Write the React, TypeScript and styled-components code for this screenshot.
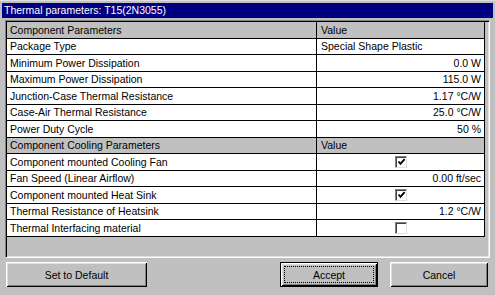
import React from 'react';
import styled, { createGlobalStyle } from 'styled-components';

type Param = {
  label: string;
  value?: string;
  align?: 'left' | 'right';
  checked?: boolean;
};

type Section = {
  title: string;
  rows: Param[];
};

const SECTIONS: Section[] = [
  {
    title: 'Component Parameters',
    rows: [
      { label: 'Package Type', value: 'Special Shape Plastic', align: 'left' },
      { label: 'Minimum Power Dissipation', value: '0.0 W' },
      { label: 'Maximum Power Dissipation', value: '115.0 W' },
      { label: 'Junction-Case Thermal Resistance', value: '1.17 °C/W' },
      { label: 'Case-Air Thermal Resistance', value: '25.0 °C/W' },
      { label: 'Power Duty Cycle', value: '50 %' },
    ],
  },
  {
    title: 'Component Cooling Parameters',
    rows: [
      { label: 'Component mounted Cooling Fan', checked: true },
      { label: 'Fan Speed (Linear Airflow)', value: '0.00 ft/sec' },
      { label: 'Component mounted Heat Sink', checked: true },
      { label: 'Thermal Resistance of Heatsink', value: '1.2 °C/W' },
      { label: 'Thermal Interfacing material', checked: false },
    ],
  },
];

const GlobalStyle = createGlobalStyle`
  html, body {
    margin: 0;
    padding: 0;
    background: #c0c0c0;
  }
  body {
    font-family: "Liberation Sans", Arial, sans-serif;
    font-size: 10.5px;
    color: #000;
  }
`;

const Checkbox = ({ checked }: { checked: boolean }) => (
  <SCheckBox>
    {checked && (
      <svg width="9" height="9" viewBox="0 0 9 9">
        <path d="M1.5 3.5 L3.5 5.8 L7.6 1.2" fill="none" stroke="#000" strokeWidth="1.9" />
      </svg>
    )}
  </SCheckBox>
);

const App = () => {
  return (
    <SWindow>
      <GlobalStyle />
      <STitleBar>Thermal parameters: T15(2N3055)</STitleBar>
      <SFrame>
        <SGrid>
          {SECTIONS.map((section) => (
            <React.Fragment key={section.title}>
              <SRow>
                <SCell $header>{section.title}</SCell>
                <SCell $header $value>
                  Value
                </SCell>
              </SRow>
              {section.rows.map((row) => (
                <SRow key={row.label}>
                  <SCell>{row.label}</SCell>
                  <SCell $value $align={row.checked === undefined ? row.align || 'right' : 'center'}>
                    {row.checked === undefined ? row.value : <Checkbox checked={row.checked} />}
                  </SCell>
                </SRow>
              ))}
            </React.Fragment>
          ))}
        </SGrid>
      </SFrame>
      <SButtonBar>
        <SButton $width={141}>Set to Default</SButton>
        <SSpacer />
        <SButton $width={98} $default>
          <SFocus>Accept</SFocus>
        </SButton>
        <SButton $width={98}>Cancel</SButton>
      </SButtonBar>
    </SWindow>
  );
};

export default App;

const SWindow = styled.div`
  width: 495px;
  height: 295px;
  box-sizing: border-box;
  padding: 2px;
  background: #c0c0c0;
  border-top: 1px solid #dfdfdf;
  display: flex;
  flex-direction: column;
  overflow: hidden;
`;

const STitleBar = styled.div`
  height: 15px;
  background: #000080;
  color: #fff;
  font-size: 10.5px;
  line-height: 15px;
  padding-left: 2px;
  white-space: nowrap;
`;

const SFrame = styled.div`
  margin: 2px 3px 0 3px;
  height: 238px;
  box-sizing: border-box;
  background: #c0c0c0;
  border-top: 1px solid #808080;
  border-left: 1px solid #808080;
  border-right: 1px solid #fff;
  border-bottom: 1px solid #fff;
  box-shadow: inset 1px 1px 0 #000, inset -1px -1px 0 #dfdfdf;
  padding: 1px;
`;

const SGrid = styled.div`
  display: flex;
  flex-direction: column;
  width: 478px;
`;

const SRow = styled.div`
  display: grid;
  grid-template-columns: 310px 168px;
  height: 16.5px;
`;

const SCell = styled.div<{ $header?: boolean; $value?: boolean; $align?: 'left' | 'right' | 'center' }>`
  box-sizing: border-box;
  display: flex;
  align-items: center;
  justify-content: ${({ $align }) =>
    $align === 'right' ? 'flex-end' : $align === 'center' ? 'center' : 'flex-start'};
  padding: 0 3px 0 ${({ $value }) => ($value ? '4px' : '3px')};
  background: ${({ $header }) => ($header ? '#c0c0c0' : '#fff')};
  border-bottom: 1px solid #000;
  border-right: 1px solid #000;
  white-space: nowrap;
  overflow: hidden;
`;

const SCheckBox = styled.div`
  width: 12px;
  height: 12px;
  box-sizing: border-box;
  background: #fff;
  border-top: 1px solid #808080;
  border-left: 1px solid #808080;
  border-right: 1px solid #dfdfdf;
  border-bottom: 1px solid #dfdfdf;
  box-shadow: inset 1px 1px 0 #404040;
  display: flex;
  align-items: center;
  justify-content: center;
  padding: 1px 0 0 1px;
`;

const SButtonBar = styled.div`
  display: flex;
  align-items: stretch;
  gap: 12px;
  height: 25px;
  margin-top: 4px;
  padding: 0 5px 0 4px;
`;

const SSpacer = styled.div`
  flex: 1;
`;

const SButton = styled.button<{ $width: number; $default?: boolean }>`
  width: ${({ $width }) => $width}px;
  height: 25px;
  box-sizing: border-box;
  margin: 0;
  padding: ${({ $default }) => ($default ? '2px' : '0')};
  font-family: "Liberation Sans", Arial, sans-serif;
  font-size: 10.5px;
  color: #000;
  background: #c0c0c0;
  border: ${({ $default }) => ($default ? '1px solid #000' : 'none')};
  box-shadow: inset 1px 1px 0 #fff, inset -1px -1px 0 #000, inset 2px 2px 0 #dfdfdf,
    inset -2px -2px 0 #808080;
  display: flex;
  align-items: center;
  justify-content: center;
`;

const SFocus = styled.span`
  flex: 1;
  align-self: stretch;
  margin: 1px;
  border: 1px dotted #000;
  display: flex;
  align-items: center;
  justify-content: center;
`;
